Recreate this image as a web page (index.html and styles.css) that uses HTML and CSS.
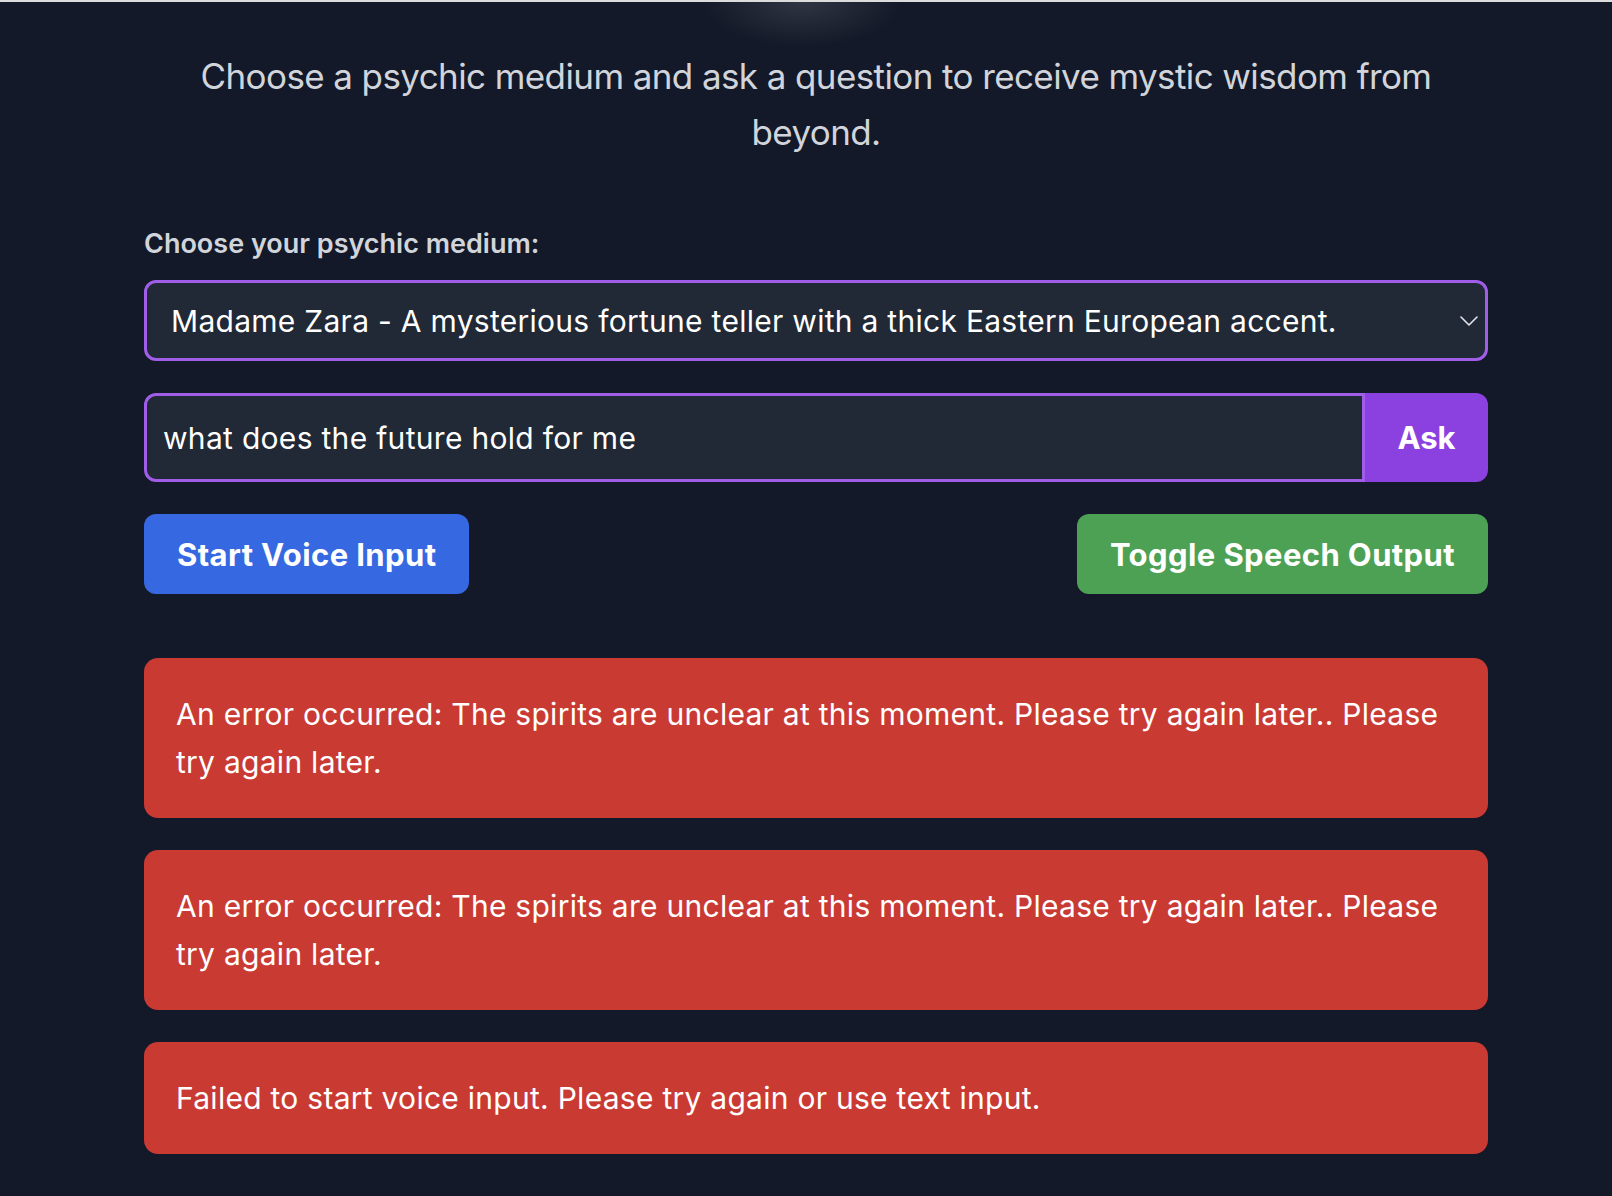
FILE: index.html
```html
<!DOCTYPE html>
<html lang="en">
<head>
<meta charset="utf-8">
<title>Psychic Medium</title>
<link rel="stylesheet" href="styles.css">
</head>
<body>
  <main class="page">
    <p class="intro">Choose a psychic medium and ask a question to receive mystic wisdom from beyond.</p>

    <label class="field-label" for="medium">Choose your psychic medium:</label>
    <div class="select-wrap">
      <select id="medium" class="medium-select">
        <option>Madame Zara - A mysterious fortune teller with a thick Eastern European accent.</option>
      </select>
      <svg class="chevron" width="18" height="10" viewBox="0 0 18 10" aria-hidden="true">
        <path d="M1 1 L9 9 L17 1" fill="none" stroke="#e5e7eb" stroke-width="1.6" stroke-linecap="round" stroke-linejoin="round"/>
      </svg>
    </div>

    <form class="ask-row">
      <input class="question" type="text" value="what does the future hold for me">
      <button class="ask-btn" type="button">Ask</button>
    </form>

    <div class="actions">
      <button class="btn btn-blue" type="button">Start Voice Input</button>
      <button class="btn btn-green" type="button">Toggle Speech Output</button>
    </div>

    <div class="messages">
      <div class="error">An error occurred: The spirits are unclear at this moment. Please try again later.. Please try again later.</div>
      <div class="error">An error occurred: The spirits are unclear at this moment. Please try again later.. Please try again later.</div>
      <div class="error">Failed to start voice input. Please try again or use text input.</div>
    </div>
  </main>
</body>
</html>
```

FILE: styles.css
```css
* {
  box-sizing: border-box;
}

html {
  background: #131928;
}

body {
  margin: 0;
  padding: 0 0 40px 20px;
  min-height: 1196px;
  border-top: 2px solid #dcdcdc;
  background:
    radial-gradient(ellipse 100px 45px at 802px 0, rgba(255, 255, 255, 0.12), rgba(255, 255, 255, 0) 100%),
    #131928;
  font-family: Inter, "Noto Sans", "Liberation Sans", sans-serif;
  color: #ffffff;
}

.page {
  width: 1344px;
  margin: 0 auto;
  padding-top: 46px;
}

.intro {
  margin: 0 0 64px;
  font-size: 35px;
  line-height: 56px;
  letter-spacing: -0.6px;
  color: #d1d5db;
  text-align: center;
}

.field-label {
  display: block;
  margin-bottom: 16px;
  font-size: 27px;
  line-height: 40px;
  font-weight: 600;
  color: #d1d5db;
}

.select-wrap {
  position: relative;
}

.medium-select {
  display: block;
  width: 100%;
  height: 81px;
  padding: 0 50px 0 24px;
  border: 3px solid #9f5de8;
  border-radius: 12px;
  background: #212836;
  color: #ffffff;
  font-family: inherit;
  font-size: 30px;
  letter-spacing: 0.28px;
  appearance: none;
  -webkit-appearance: none;
  outline: none;
}

.chevron {
  position: absolute;
  right: 10px;
  top: 36px;
  pointer-events: none;
}

.ask-row {
  display: flex;
  margin: 32px 0 0;
  height: 89px;
}

.question {
  flex: 1;
  min-width: 0;
  height: 100%;
  padding: 0 16px;
  border: 3px solid #9f5de8;
  border-radius: 12px 0 0 12px;
  background: #212836;
  color: #ffffff;
  font-family: inherit;
  font-size: 30px;
  letter-spacing: 0.3px;
  outline: none;
}

.ask-btn {
  width: 123px;
  border: 0;
  border-radius: 0 12px 12px 0;
  background: #8b40e0;
  color: #ffffff;
  font-family: inherit;
  font-size: 31px;
  font-weight: 700;
}

.actions {
  display: flex;
  justify-content: space-between;
  margin-top: 32px;
}

.btn {
  height: 80px;
  padding: 0 33px;
  border: 0;
  border-radius: 12px;
  color: #ffffff;
  font-family: inherit;
  font-size: 31px;
  letter-spacing: 0.4px;
  font-weight: 700;
}

.btn-blue {
  background: #3668e2;
}

.btn-green {
  background: #4ca155;
}

.messages {
  display: flex;
  flex-direction: column;
  gap: 32px;
  margin-top: 64px;
}

.error {
  padding: 32px;
  border-radius: 14px;
  background: #c93a33;
  color: #ffffff;
  font-size: 30px;
  line-height: 48px;
  letter-spacing: 0.27px;
}
```
